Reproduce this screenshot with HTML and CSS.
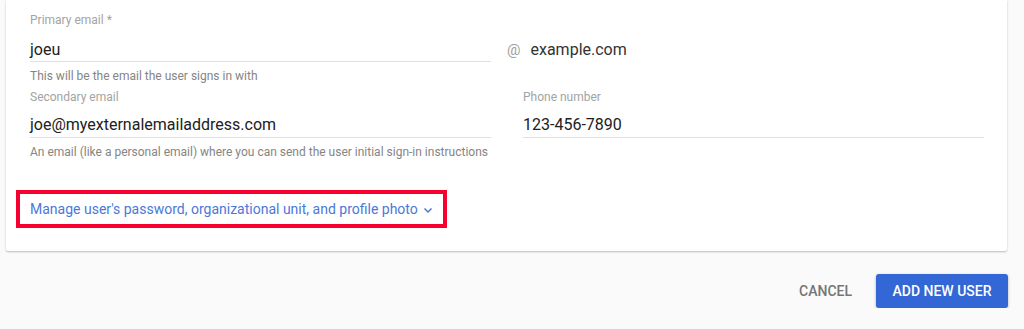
FILE: index.html
```html
<!DOCTYPE html>
<html lang="en">
<head>
    <meta charset="UTF-8">
    <meta name="viewport" content="width=device-width, initial-scale=1.0">
    <title>Add New User</title>
    <link rel="stylesheet" href="styles.css">
</head>
<body>
    <div class="page">
        <div class="user-card">
            <div class="primary-row">
                <div class="field">
                    <div class="field-label">Primary email *</div>
                    <div class="field-input">joeu</div>
                    <div class="field-help">This will be the email the user signs in with</div>
                </div>
                <div class="domain">
                    <span class="domain-at">@</span>
                    <span class="domain-name">example.com</span>
                </div>
            </div>

            <div class="second-row">
                <div class="field">
                    <div class="field-label">Secondary email</div>
                    <div class="field-input">joe@myexternalemailaddress.com</div>
                    <div class="field-help">An email (like a personal email) where you can send the user initial sign-in instructions</div>
                </div>
                <div class="field">
                    <div class="field-label">Phone number</div>
                    <div class="field-input">123-456-7890</div>
                </div>
            </div>

            <div class="manage-box">
                <a href="#" class="manage-link">Manage user's password, organizational unit, and profile photo</a>
                <svg class="manage-chevron" width="10" height="10" viewBox="0 0 10 10">
                    <path d="M1.5 3.5 L5 7 L8.5 3.5" fill="none" stroke="#4a78da" stroke-width="1.5"/>
                </svg>
            </div>
        </div>

        <div class="actions">
            <button type="button" class="cancel-btn">Cancel</button>
            <button type="button" class="add-btn">Add new user</button>
        </div>
    </div>
</body>
</html>
```

FILE: styles.css
```css
body {
    margin: 0;
    padding: 0;
    font-family: Roboto, "Liberation Sans", sans-serif;
    background: #fafafa;
    overflow: hidden;
}
.page {
    width: 1001px;
    margin-left: 6px;
}
.user-card {
    background: #fff;
    box-shadow: 0 1px 2px rgba(0, 0, 0, 0.25);
    border-radius: 0 0 2px 2px;
    padding: 12px 24px 23px 24px;
}
.primary-row {
    display: flex;
    align-items: flex-start;
}
.primary-row .field {
    width: 461px;
}
.domain {
    display: flex;
    align-items: center;
    gap: 10px;
    margin-left: 16px;
    padding-top: 28px;
    line-height: 20px;
}
.domain-at {
    font-size: 15px;
    color: #9e9e9e;
}
.domain-name {
    font-size: 16px;
    color: #333;
}
.second-row {
    display: grid;
    grid-template-columns: 461px 461px;
    column-gap: 32px;
    margin-top: 5px;
}
.second-row .field-input {
    padding: 10px 0 2px 0;
}
.field-label {
    font-size: 12px;
    line-height: 16px;
    color: #a3a3a3;
}
.field-input {
    font-size: 16px;
    line-height: 20px;
    color: #212121;
    padding: 12px 0 1px 0;
    border-bottom: 1px solid #e0e0e0;
}
.field-help {
    font-size: 12px;
    line-height: 16px;
    color: #858585;
    margin-top: 6px;
}
.manage-box {
    display: inline-flex;
    align-items: center;
    height: 30px;
    margin: 30px 0 0 -14px;
    padding: 0 10px 0 10px;
    border: 4px solid #f5002f;
}
.manage-link {
    font-size: 14px;
    color: #4a78da;
    text-decoration: none;
}
.manage-chevron {
    margin-left: 5px;
    margin-top: 2px;
}
.actions {
    display: flex;
    justify-content: flex-end;
    align-items: center;
    gap: 16px;
    margin-top: 23px;
}
.cancel-btn {
    font-family: Roboto, "Liberation Sans", sans-serif;
    background: none;
    border: none;
    padding: 0 8px;
    font-size: 14px;
    font-weight: 500;
    color: #757575;
    text-transform: uppercase;
    height: 34px;
    cursor: pointer;
}
.add-btn {
    font-family: Roboto, "Liberation Sans", sans-serif;
    background: #3367d6;
    border: none;
    border-radius: 3px;
    width: 132px;
    height: 34px;
    font-size: 14px;
    font-weight: 500;
    color: #fff;
    text-transform: uppercase;
    box-shadow: 0 1px 3px rgba(0, 0, 0, 0.3);
    cursor: pointer;
    margin-right: -1px;
}
```
